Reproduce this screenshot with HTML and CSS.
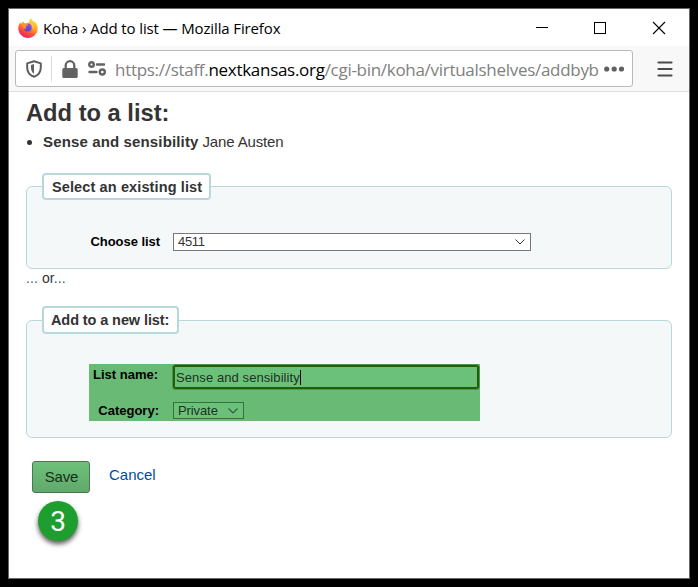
FILE: index.html
```html
<!DOCTYPE html>
<html lang="en">
<head>
<meta charset="utf-8">
<title>Koha › Add to list</title>
<link rel="stylesheet" href="styles.css">
</head>
<body>
<div class="window">
  <header class="titlebar">
    <svg class="firefox" width="20" height="20" viewBox="0 0 20 20">
      <defs>
        <linearGradient id="flame" x1=".8" y1="0" x2=".25" y2="1"><stop offset="0" stop-color="#ffe73b"/><stop offset=".4" stop-color="#ffa529"/><stop offset=".72" stop-color="#ff4740"/><stop offset="1" stop-color="#ed1d68"/></linearGradient>
        <linearGradient id="globe" x1=".7" y1="0" x2=".3" y2="1"><stop offset="0" stop-color="#9a50f5"/><stop offset="1" stop-color="#514ac0"/></linearGradient>
      </defs>
      <path fill="url(#flame)" d="M2.200 4.200 3 6 5.500 3.200 6 5.500 9 5.400 11.500 4 11.600 1.800 12.600.2C14 1.700 15 2.500 15.600 4.200L16.300 3.300C18.800 5.600 19.900 8 19.700 11.200 19.300 16 15.200 19.900 10 19.900 4.500 19.900.3 15.600.3 10.500.3 8 1 6.200 2.200 4.200Z"/>
      <circle cx="9.800" cy="9.500" r="3.900" fill="url(#globe)"/>
      <path fill="#ff9825" d="M3.500 5.300C5 4.500 6.800 5 8 6.100L10 6.500C9.800 7.600 8.400 7.900 7.900 8.500 7.500 9.300 7.600 10 8.200 10.600 5.800 11.500 4.300 9.500 3.500 5.300Z"/>
      <path fill="#ffcb38" d="M12 2.500C14.800 5 16.300 8 15.200 11.800 14.600 8.500 13.800 6.500 11.300 5Z"/>
    </svg>
    <span class="title">Koha › Add to list — Mozilla Firefox</span>
    <svg class="controls" width="130" height="14" viewBox="0 0 130 14" fill="none" stroke="#000" shape-rendering="crispEdges">
      <path d="M0 6.500H12M58.500 1.500H69.500V12.500H58.500Z"/>
      <path d="M117 1 129 13M129 1 117 13" shape-rendering="auto" stroke-width="1.100"/>
    </svg>
  </header>
  <div class="toolbar">
    <div class="urlbar">
      <svg class="shield" width="16" height="18" viewBox="0 0 16 18"><path fill="none" stroke="#5f5f5f" stroke-width="2" stroke-linejoin="round" d="M8 1.200 14.800 3.400V7.500C14.800 12 12.300 15.200 8 16.800 3.700 15.200 1.200 12 1.200 7.500V3.400Z"/><path fill="#5f5f5f" d="M8 4 5 5V8C5 10.500 6 12.500 8 13.800Z"/></svg>
      <i class="separator"></i>
      <svg class="lock" width="16" height="18" viewBox="0 0 16 18"><rect x=".3" y="8" width="15.400" height="10" rx="1.500" fill="#636363"/><path d="M3.700 9V5.500a4.300 4.300 0 0 1 8.600 0V9" fill="none" stroke="#636363" stroke-width="2.300"/></svg>
      <svg class="permissions" width="18" height="15" viewBox="0 0 18 15" fill="none" stroke="#636363" stroke-width="2.400"><circle cx="3.500" cy="3.500" r="2.300"/><path d="M9 3.500H16M1.500 11H8.500" stroke-linecap="round"/><circle cx="14.300" cy="11" r="2.500"/></svg>
      <span class="url">https://staff.<b>nextkansas.org</b>/cgi-bin/koha/virtualshelves/addbyb</span>
      <svg class="dots" width="20" height="6" viewBox="0 0 20 6" fill="#606060"><circle cx="2.700" cy="3" r="2.600"/><circle cx="10.200" cy="3" r="2.600"/><circle cx="17.500" cy="3" r="2.600"/></svg>
    </div>
    <svg class="menu" width="16" height="16" viewBox="0 0 16 16"><path stroke="#4b4b4b" stroke-width="2.200" stroke-linecap="round" d="M1.500 1.500H14.500M1.500 8H14.500M1.500 14.500H14.500"/></svg>
  </div>
  <main>
    <h1>Add to a list:</h1>
    <ul class="titles"><li><b>Sense and sensibility</b> Jane Austen</li></ul>
    <section class="group existing">
      <h2 class="legend">Select an existing list</h2>
      <div class="row choose">
        <label>Choose list</label>
        <div class="select"><span>4511</span><svg width="10" height="6" viewBox="0 0 10 6"><path d="M.5.500 5 5 9.500.5" fill="none" stroke="#333"/></svg></div>
      </div>
    </section>
    <p class="or"><span>...</span> or<span>...</span></p>
    <section class="group new">
      <h2 class="legend">Add to a new list:</h2>
      <div class="highlight">
        <div class="row name"><label>List name:</label><div class="input"><span>Sense and sensibility</span></div></div>
        <div class="row category"><label>Category:</label><div class="select small"><span>Private</span><svg width="10" height="6" viewBox="0 0 10 6"><path d="M.5.500 5 5 9.500.5" fill="none" stroke="#2c6237" stroke-width="1.200"/></svg></div></div>
      </div>
    </section>
    <div class="actions"><button>Save</button><a>Cancel</a></div>
    <div class="step">3</div>
  </main>
</div>
</body>
</html>
```
FILE: styles.css
```css
* { box-sizing: border-box; }
body { margin: 0; padding: 8px; height: 587px; background: #000; overflow: hidden; font-family: "Liberation Sans", Arial, sans-serif; color: #333; }
svg { display: block; flex: none; }
.window { width: 682px; height: 571px; border: 1px solid #686868; background: #fff; }
.titlebar { height: 37px; display: flex; align-items: center; padding-left: 9px; font: 15px/20px "Open Sans", "Noto Sans", sans-serif; color: #000; }
.title { margin-left: 5px; width: 260px; white-space: nowrap; letter-spacing: -.13px; }
.controls { margin-left: 233px; }
.toolbar { height: 46px; display: flex; background: #f8f8f8; border-bottom: 1px solid #dedede; padding: 4px 0 0 6px; }
.urlbar { width: 618px; height: 37px; display: flex; align-items: center; background: #fff; border: 1px solid #b9b9b9; border-radius: 3px; }
.shield { margin-left: 10px; }
.separator { width: 1px; height: 26px; margin-left: 9px; background: #dedede; }
.lock { margin-left: 10px; }
.permissions { margin-left: 10px; }
.url { width: 486px; margin: 2px 0 0 9px; white-space: nowrap; font: 17px/24px "Open Sans", "Noto Sans", sans-serif; letter-spacing: -.29px; color: #808080; }
.url b { font-weight: 400; color: #000; }
.dots { margin-left: 3px; }
.menu { margin: 11px 0 0 24px; }
main { padding: 0 17px; }
h1 { margin: 0; padding-top: 6px; font-size: 23.7px; line-height: 30px; }
.titles { margin: 0; padding: 4px 0 0 17px; font-size: 15px; line-height: 20px; letter-spacing: -.15px; }
.titles b { letter-spacing: .14px; }
.group { width: 646px; border: 1px solid #b9d8d9; border-radius: 6px; background: #f4f8f9; }
.existing { height: 83px; margin-top: 34px; }
.legend { width: 169px; height: 27px; margin: -14px 0 0 15px; padding: 0 8px; border: 2px solid #b9d8d9; border-radius: 4px; background: #fff; font-size: 14.5px; line-height: 24px; letter-spacing: .12px; white-space: nowrap; }
.row { display: flex; align-items: center; }
label { font-size: 13px; line-height: 16px; font-weight: 700; color: #000; text-align: right; }
.choose { margin-top: 33px; }
.choose label { width: 133px; margin-right: 13px; letter-spacing: -.05px; }
.select { width: 358px; height: 18px; display: flex; align-items: center; justify-content: space-between; padding: 0 5px 0 4px; border: 1px solid #767676; background: #fff; font-size: 13px; line-height: 15px; }
.select span { margin-top: -2px; letter-spacing: -.3px; }
.or { margin: 0; font-size: 14px; line-height: 19px; letter-spacing: .1px; }
.or span { color: #345a73; }
.new { height: 118px; margin-top: 32px; }
.new .legend { width: 137px; height: 28px; margin-top: -15px; padding: 0 7px; letter-spacing: -.1px; }
.highlight { width: 391px; height: 57px; margin: 30px 0 0 62px; background: #68ba75; }
.highlight label { width: 70px; margin-right: 14px; }
.name { height: 26px; align-items: flex-start; }
.name label { padding-top: 3px; }
.input { width: 308px; height: 26px; flex: none; display: flex; align-items: center; border: 1px solid #4c9557; box-shadow: inset 0 0 0 2px #205f06; border-radius: 3px; background: #6cc17a; padding-left: 3px; font-size: 13px; letter-spacing: .08px; color: #1c331f; }
.input span { border-right: 1px solid #000; line-height: 15px; }
.category { margin-top: 12px; }
.select.small { width: 71px; height: 17px; background: #6cc17a; border-color: #37703f; color: #1c331f; }
.small span { margin-top: -1px; letter-spacing: -.1px; }
.actions { display: flex; align-items: center; margin: 23px 0 0 6px; font-size: 15px; }
button { width: 58px; height: 32px; padding: 0 0 2px 1px; border: 1px solid #4c7552; border-radius: 3px; background: linear-gradient(#6ec17b, #60a96b); font: 15px "Liberation Sans", sans-serif; letter-spacing: -.2px; color: #17301a; }
a { margin: -6px 0 0 19px; color: #004d99; }
.step { width: 40px; height: 40px; margin: 8px 0 0 12px; border-radius: 50%; background: #1e9e2e; color: #fff; font: 28px/42px Roboto, sans-serif; text-align: center; box-shadow: 0 3px 5px rgba(0,0,0,.65); }
```
